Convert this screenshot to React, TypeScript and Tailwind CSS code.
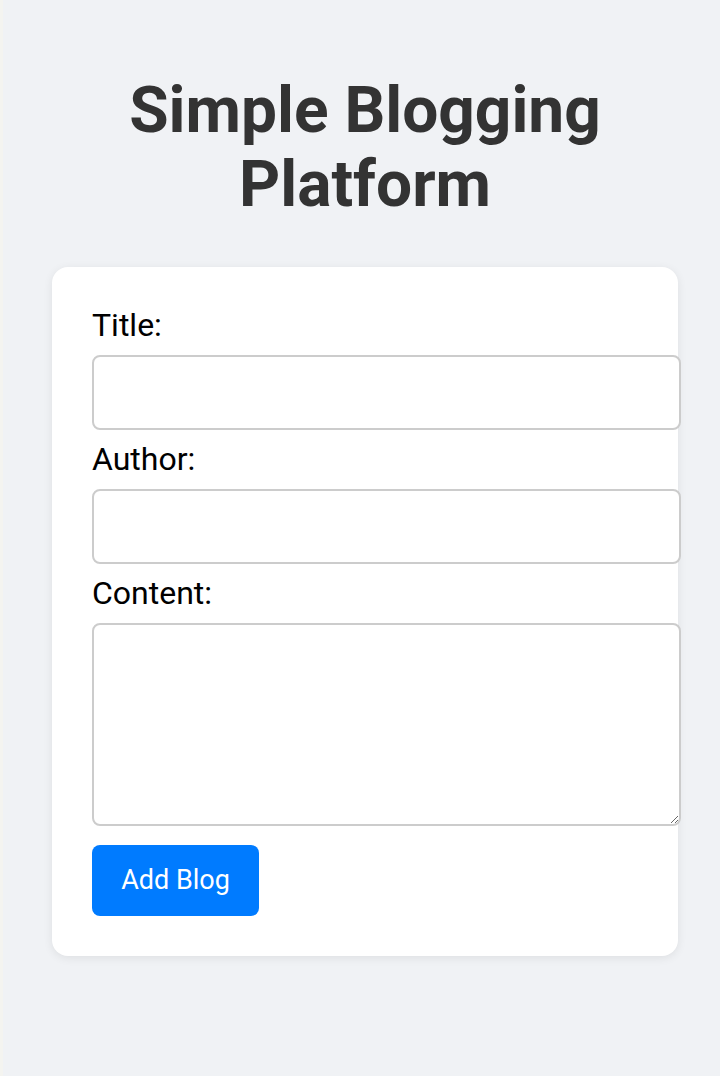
import React from "react";

export default function App() {
  return (
    <div
      className="min-h-[1076px] w-[720px] bg-[#f0f2f5] flex"
      style={{ fontFamily: "Roboto, 'Liberation Sans', sans-serif" }}
    >
      <div className="w-[3px] bg-[#f4f4f0] shrink-0" />
      <div className="flex-1 flex flex-col items-center pl-[7px]">
        <h1 className="mt-[74px] text-[64px] leading-[74px] font-bold text-[#333] text-center w-[520px]">
          Simple Blogging Platform
        </h1>
        <div className="mt-[45px] w-[626px] bg-white rounded-[16px] shadow-[0_2px_10px_rgba(0,0,0,0.08)] pl-[40px] pt-[40px] pb-[40px]">
          <div className="flex flex-col">
            <label className="text-[32px] leading-[36px] text-black mb-[12px]">Title:</label>
            <input className="w-[589px] h-[75px] border-2 border-[#ccc] rounded-[8px] bg-white" />
            <label className="text-[32px] leading-[36px] text-black mt-[11px] mb-[12px]">Author:</label>
            <input className="w-[589px] h-[75px] border-2 border-[#ccc] rounded-[8px] bg-white" />
            <label className="text-[32px] leading-[36px] text-black mt-[11px] mb-[12px]">Content:</label>
            <textarea className="w-[589px] h-[203px] border-2 border-[#ccc] rounded-[8px] bg-white" />
            <div className="mt-[19px]">
              <button className="w-[167px] h-[71px] bg-[#007bff] text-white text-[27px] rounded-[8px]">
                Add Blog
              </button>
            </div>
          </div>
        </div>
      </div>
    </div>
  );
}
